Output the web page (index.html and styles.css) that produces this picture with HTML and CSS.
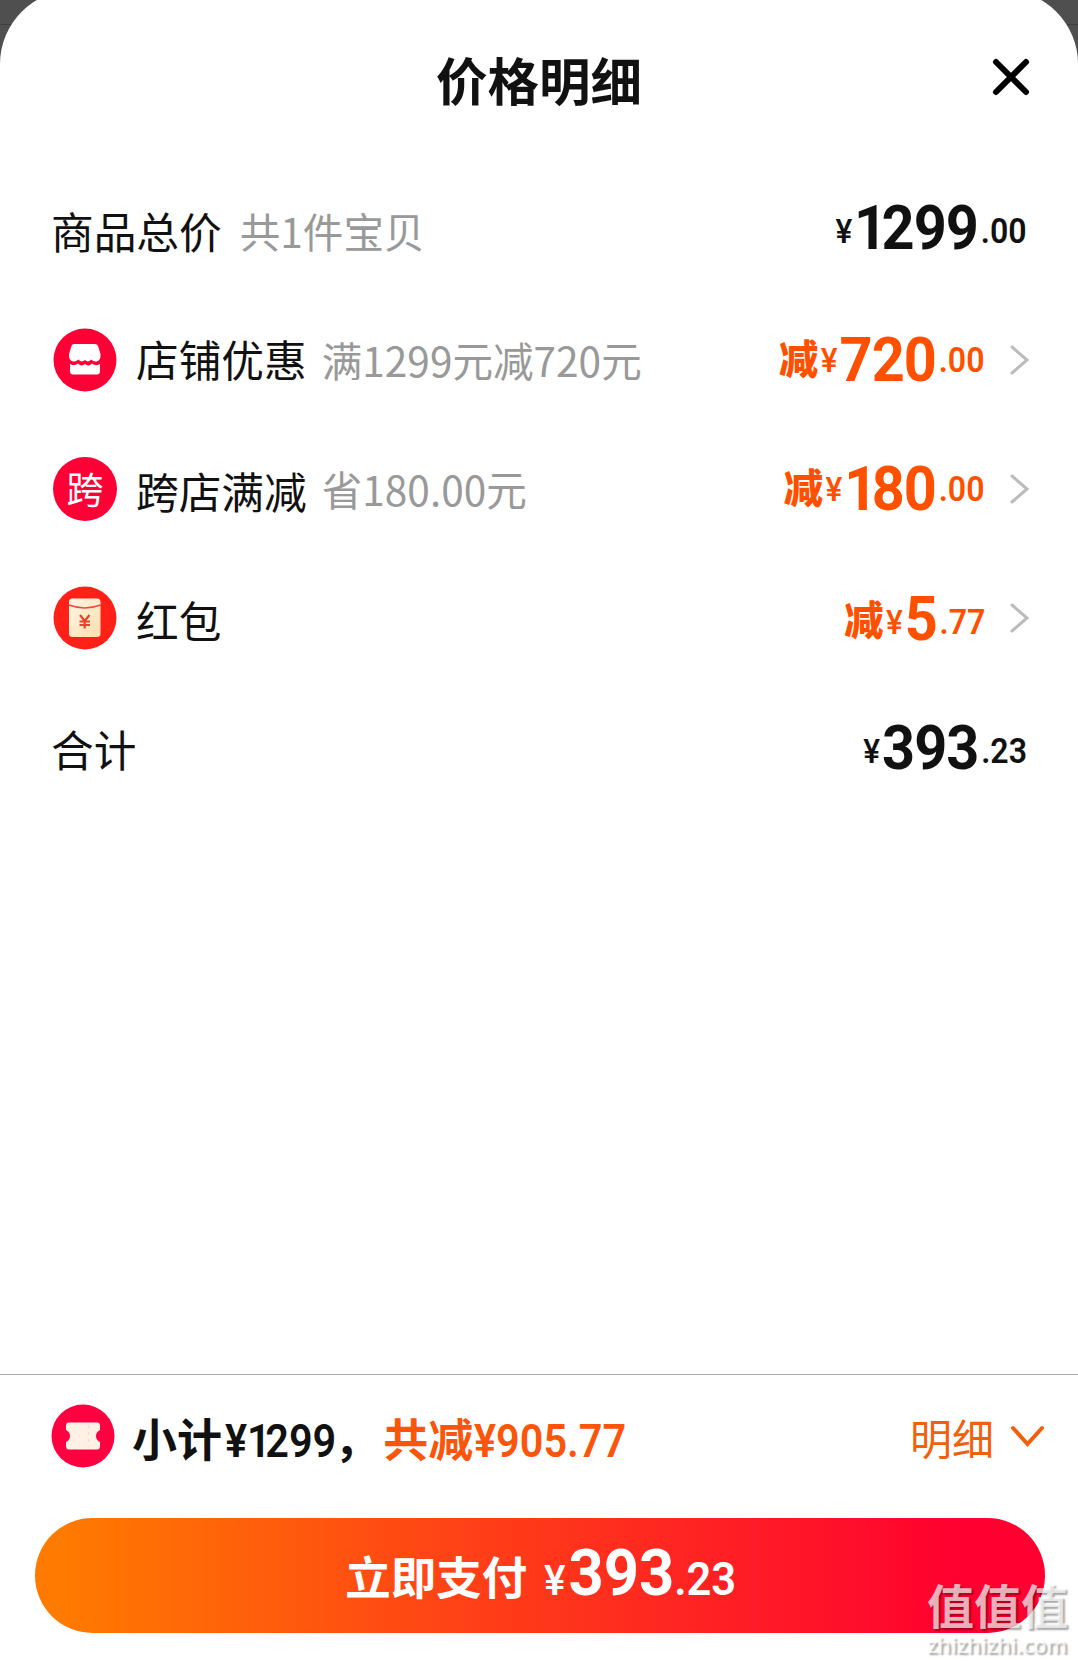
FILE: index.html
```html
<!DOCTYPE html>
<html lang="zh-CN">
<head>
    <meta charset="UTF-8">
    <meta name="viewport" content="width=device-width, initial-scale=1.0">
    <title>价格明细</title>
    <link rel="stylesheet" href="styles.css">
</head>
<body>
    <div class="backdrop-line"></div>
    <div class="sheet">
        <div class="header">
            <h1>价格明细</h1>
            <svg class="close" width="40" height="40" viewBox="0 0 40 40">
                <path d="M5 5 L35 35 M35 5 L5 35" />
            </svg>
        </div>

        <!-- Price rows -->
        <div class="row row-first">
            <span class="label">商品总价</span>
            <span class="note">共1件宝贝</span>
            <span class="price"><span class="yen">¥</span><span class="num"><span class="one">1</span>299</span><span class="dec">.00</span></span>
        </div>
        <div class="row">
            <svg class="icon" width="64" height="64" viewBox="0 0 64 64">
                <circle cx="32" cy="32" r="31.5" fill="#ff0036" />
                <path d="M21 16 H42 Q44 16 45 18 L47.500 26 Q48 33 43.500 33.500 Q40.500 34 38 31.500 Q35 35 32 32 Q28.500 35 25.500 31.500 Q23 34 20 33.500 Q15.500 32.500 16 26 L18.500 18 Q19 16 21 16 Z" fill="#fff" />
                <path d="M17 36 Q21 38.500 25 35.500 Q28.500 39 32 36 Q35.500 39 39 35.500 Q43 38.500 47 36 V43 Q47 46.500 44 46.500 H20 Q17 46.500 17 43 Z" fill="#fff" />
            </svg>
            <span class="label">店铺优惠</span>
            <span class="note">满1299元减720元</span>
            <span class="price off"><b>减</b><span class="yen">¥</span><span class="num">720</span><span class="dec">.00</span></span>
            <svg class="arrow" width="22" height="34" viewBox="0 0 22 34"><path d="M3 4 L18 17 L3 30" /></svg>
        </div>
        <div class="row">
            <span class="icon icon-text">跨</span>
            <span class="label low">跨店满减</span>
            <span class="note">省180.00元</span>
            <span class="price off"><b>减</b><span class="yen">¥</span><span class="num"><span class="one">1</span>80</span><span class="dec">.00</span></span>
            <svg class="arrow" width="22" height="34" viewBox="0 0 22 34"><path d="M3 4 L18 17 L3 30" /></svg>
        </div>
        <div class="row">
            <svg class="icon" width="64" height="64" viewBox="0 0 64 64">
                <defs>
                    <linearGradient id="paper" x1="0" y1="0" x2="1" y2="1">
                        <stop offset="0" stop-color="#fff6e6" />
                        <stop offset="1" stop-color="#fbdfae" />
                    </linearGradient>
                </defs>
                <circle cx="32" cy="32" r="31.500" fill="#ff2018" />
                <rect x="16" y="12.500" width="31.500" height="38.500" rx="3.500" fill="url(#paper)" />
                <path d="M16 19 Q31.700 25 47.500 19" fill="none" stroke="#f0493a" stroke-width="1.600" />
                <path d="M27 29 L31.700 35 L36.500 29 M31.700 35 V42.500 M26.500 35.500 H37 M26.500 39 H37" fill="none" stroke="#e8432e" stroke-width="2.200" />
            </svg>
            <span class="label low">红包</span>
            <span class="price off near"><b>减</b><span class="yen">¥</span><span class="num">5</span><span class="dec">.77</span></span>
            <svg class="arrow" width="22" height="34" viewBox="0 0 22 34"><path d="M3 4 L18 17 L3 30" /></svg>
        </div>
        <div class="row row-total">
            <span class="label">合计</span>
            <span class="price"><span class="yen">¥</span><span class="num">393</span><span class="dec">.23</span></span>
        </div>

        <!-- Bottom bar -->
        <div class="footer">
            <div class="summary">
                <svg class="icon" width="64" height="64" viewBox="0 0 64 64">
                    <circle cx="32" cy="32" r="31.500" fill="#ff0040" />
                    <path d="M18 18.500 H46 Q49 18.500 49 21.500 V26 Q45 28 45 32 Q45 36 49 38 V42 Q49 45.500 46 45.500 H18 Q15 45.500 15 42 V38 Q19 36 19 32 Q19 28 15 26 V21.500 Q15 18.500 18 18.500 Z" fill="#fff1e6" />
                    <path d="M37.500 21 V43" stroke="#fbd9c8" stroke-width="1.500" stroke-dasharray="3 4" />
                </svg>
                <span class="subtotal">小计<span class="digits">¥<span class="one">1</span>299</span>，</span>
                <span class="saved">共减<span class="digits">¥905.77</span></span>
                <span class="detail">明细</span>
                <svg class="down" width="36" height="26" viewBox="0 0 36 26"><path d="M4 5 L18.500 21 L33 5" /></svg>
            </div>
            <div class="pay">
                <span class="pay-text">立即支付</span>
                <span class="pay-price"><span class="pay-yen">¥</span><span class="pay-num">393</span><span class="pay-dec">.23</span></span>
            </div>
        </div>
    </div>
    <div class="watermark">
        <div class="mark-name">值值值</div>
        <div class="mark-site">zhizhizhi.com</div>
    </div>
</body>
</html>
```
FILE: styles.css
```css
* {
    box-sizing: border-box;
}
body {
    margin: 0;
    height: 1663px;
    overflow: hidden;
    position: relative;
    background: #4f4f4f;
    color: #111;
    font-family: "Noto Sans CJK SC", sans-serif;
}
.backdrop-line {
    position: absolute;
    top: 24px;
    left: 0;
    width: 100%;
    height: 1px;
    background: #3e3e3e;
}
.sheet {
    position: relative;
    display: flex;
    flex-direction: column;
    height: 1673px;
    margin-top: -10px;
    padding-top: 10px;
    background: #fff;
    border-radius: 74px 74px 0 0;
}
.header {
    display: flex;
    align-items: center;
    justify-content: center;
    height: 175px;
    padding-bottom: 18px;
    position: relative;
}
h1 {
    margin: 0;
    font-size: 51.5px;
    font-weight: 700;
    line-height: 60px;
}
.close {
    position: absolute;
    right: 47px;
    top: 57px;
}
.close path {
    fill: none;
    stroke: #000;
    stroke-width: 6;
    stroke-linecap: round;
}
.row {
    display: flex;
    align-items: center;
    height: 129.3px;
    padding: 0 47px 0 53px;
    white-space: nowrap;
}
.row-first {
    height: 120px;
}
.row-first,
.row-total {
    padding-right: 51px;
    padding-left: 51px;
}
.icon {
    flex: none;
    width: 64px;
    height: 64px;
    margin-right: 19px;
}
.icon-text {
    border-radius: 50%;
    background: #ff0036;
    color: #fff;
    font-size: 37px;
    line-height: 62px;
    text-align: center;
}
.label {
    font-size: 42.7px;
    line-height: 60px;
    padding-bottom: 4px;
}
.low {
    padding-top: 2px;
    padding-bottom: 0;
}
.row-first .label {
    padding-bottom: 11px;
}
.row-first .note {
    padding-bottom: 8px;
    margin-left: 18px;
}
.row-total .label {
    padding-top: 5px;
    padding-bottom: 4px;
}
.note {
    margin-left: 15px;
    font-size: 40.6px;
    line-height: 60px;
    color: #999;
}
/* numerals are drawn slightly condensed */
.price {
    margin-left: auto;
    padding-top: 17px;
    font-family: Roboto, "Noto Sans CJK SC", sans-serif;
    font-weight: 700;
    line-height: 70px;
    transform: scaleX(0.93);
    transform-origin: right center;
}
.row-first .price {
    padding-top: 2px;
}
.price b {
    display: inline-block;
    margin-right: 4px;
    font-family: "Noto Sans CJK SC", sans-serif;
    font-size: 39.5px;
    line-height: 1;
    vertical-align: 7px;
    transform: scaleX(1.07);
}
.yen {
    margin-right: 2px;
    font-size: 34px;
    font-weight: 500;
    line-height: 1;
    vertical-align: 6px;
}
.num {
    font-size: 62px;
    letter-spacing: -1px;
}
.one {
    letter-spacing: -6px;
}
.dec {
    margin-left: 3px;
    font-size: 34.5px;
    font-weight: 600;
    line-height: 1;
    vertical-align: 6px;
}
.off {
    color: #ff5000;
}
.off .yen,
.off .dec {
    vertical-align: 9px;
}
.near .yen,
.near .dec {
    vertical-align: 6px;
}
.near b {
    vertical-align: 5px;
}
.arrow {
    flex: none;
    margin-left: 24px;
}
.arrow path {
    fill: none;
    stroke: #bbb;
    stroke-width: 3;
    stroke-linecap: round;
}
.footer {
    height: 289px;
    margin-top: auto;
    border-top: 1px solid #aaa;
}
.summary {
    display: flex;
    align-items: center;
    height: 122px;
    padding: 0 33px 0 51px;
    white-space: nowrap;
}
.subtotal,
.saved {
    font-size: 45px;
    font-weight: 700;
    line-height: 60px;
    padding-top: 6px;
}
.subtotal {
    margin-left: -2px;
}
.digits {
    display: inline-block;
    margin: 0 -13px 0 3px;
    font-family: Roboto, sans-serif;
    font-size: 45.5px;
    font-weight: 600;
    line-height: 58px;
    transform: scaleX(0.91);
    transform-origin: left center;
}
.saved {
    margin-left: 4px;
    color: #f9560c;
}
.saved .digits {
    margin-left: 1px;
}
.detail {
    margin-left: auto;
    color: #f2600c;
    font-size: 42px;
}
.down {
    margin-left: 15px;
}
.down path {
    fill: none;
    stroke: #f2600c;
    stroke-width: 4;
    stroke-linecap: round;
}
.pay {
    display: flex;
    align-items: baseline;
    justify-content: center;
    height: 115px;
    margin: 21px 33px 0 35px;
    border-radius: 58px;
    background: linear-gradient(90deg, #ff7a00 3%, #ff4714 38%, #ff0030 92%);
    color: #fff;
    font-weight: 700;
    line-height: 110px;
}
.pay-text {
    font-size: 45.5px;
}
.pay-price {
    margin: 0 -13px 0 17px;
    font-family: Roboto, sans-serif;
    transform: scaleX(0.945);
    transform-origin: left center;
}
.pay-yen {
    margin-right: 3px;
    font-size: 43px;
    font-weight: 500;
}
.pay-num {
    font-size: 65px;
}
.pay-dec {
    font-size: 46px;
    font-weight: 600;
}
.watermark {
    position: absolute;
    right: 8px;
    bottom: 5px;
    width: 143px;
    color: rgba(255, 255, 255, 0.7);
    font-weight: 700;
    text-shadow: 2px 2px 2px rgba(0, 0, 0, 0.35);
}
.mark-name {
    font-size: 47px;
    line-height: 50px;
    margin-bottom: 3px;
}
.mark-site {
    font-family: "Open Sans", sans-serif;
    font-size: 21.5px;
    font-weight: 600;
    line-height: 26px;
}
```
